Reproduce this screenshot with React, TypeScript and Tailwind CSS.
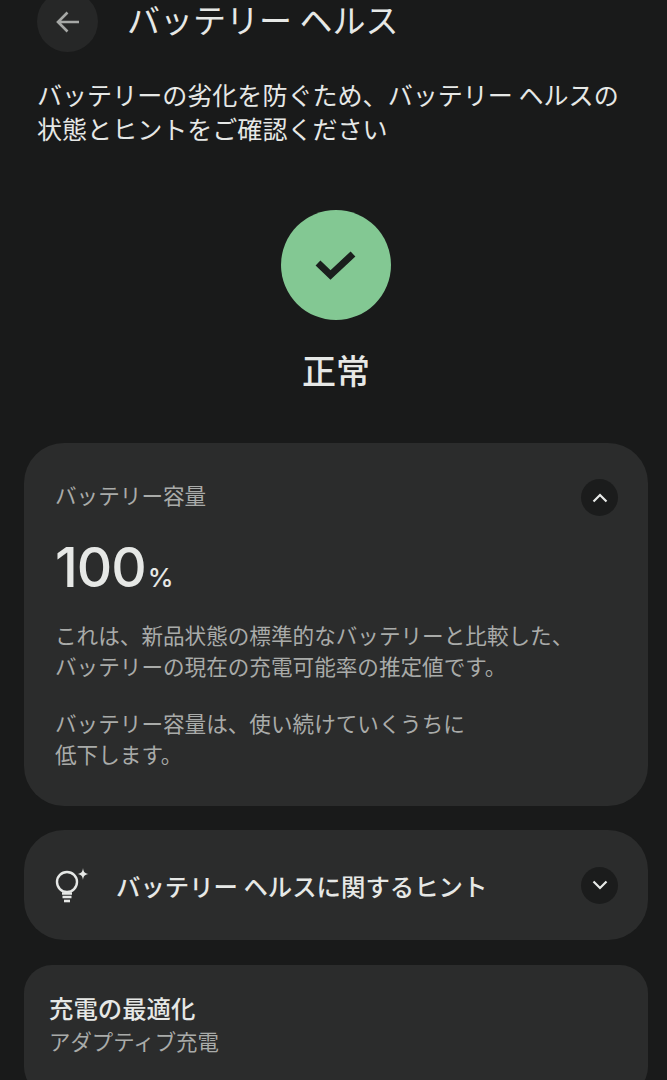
import React from "react";

const jp = "font-['Noto_Sans_CJK_JP','Noto_Sans',sans-serif]";

function Chevron({ up }: { up?: boolean }) {
  return (
    <div className="flex h-[37px] w-[37px] shrink-0 items-center justify-center rounded-full bg-[#1b1c1c]">
      <svg width="18" height="12" viewBox="0 0 18 12" fill="none" stroke="#e8eae8" strokeWidth="2.2">
        <path d={up ? "M2.5 9.5 L9 3 L15.5 9.5" : "M2.5 2.5 L9 9 L15.5 2.5"} />
      </svg>
    </div>
  );
}

export default function App() {
  return (
    <div className={`${jp} flex h-[1080px] w-[667px] flex-col overflow-hidden bg-[#191a1a] text-[#e6e8e6]`}>
      <div className="mt-[-9px] flex items-center pl-[37px]">
        <div className="flex h-[61px] w-[61px] shrink-0 items-center justify-center rounded-full bg-[#262727]">
          <svg width="28" height="28" viewBox="0 0 28 28" fill="none" stroke="#a6a8a6" strokeWidth="2.6">
            <path d="M25 14 H5 M13.5 4.5 L4 14 L13.5 23.5" />
          </svg>
        </div>
        <div className="mb-[6px] ml-[29px] text-[33px] leading-[36px]">バッテリー ヘルス</div>
      </div>

      <p className="mt-[25px] px-[37px] text-[25.05px] leading-[34px]">
        バッテリーの劣化を防ぐため、バッテリー ヘルスの
        <br />
        状態とヒントをご確認ください
      </p>

      <div className="ml-[24px] mt-[65px] flex w-[624px] flex-col items-center">
        <div className="flex h-[110px] w-[110px] items-center justify-center rounded-full bg-[#83c893]">
          <svg width="42" height="32" viewBox="0 0 42 32" fill="none" stroke="#1a1f1d" strokeWidth="7">
            <path d="M3 14 L15.5 26 L38 5" />
          </svg>
        </div>
        <div className="mt-[26px] text-[34px] font-medium leading-[48px]">正常</div>
      </div>

      <section className="ml-[24px] mt-[49px] h-[363px] w-[624px] shrink-0 rounded-[40px] bg-[#2b2c2c] pl-[31px] pr-[30px] pt-[36px]">
        <div className="flex h-[39px] items-start justify-between">
          <div className="text-[21.6px] leading-[32px] text-[#a9aba9]">バッテリー容量</div>
          <Chevron up />
        </div>
        <div className="mt-[19px] flex items-baseline font-['Inter',sans-serif] leading-[60px] text-[#e6e8e6]">
          <span className="text-[55px] font-medium tracking-[-1px]">100</span>
          <span className="ml-[2px] text-[26px] font-medium">%</span>
        </div>
        <p className="mt-[11px] text-[21.6px] leading-[31px] text-[#a9aba9]">
          これは、新品状態の標準的なバッテリーと比較した、
          <br />
          バッテリーの現在の充電可能率の推定値です。
        </p>
        <p className="mt-[26px] text-[21.6px] leading-[31px] text-[#a9aba9]">
          バッテリー容量は、使い続けていくうちに
          <br />
          低下します。
        </p>
      </section>

      <section className="ml-[24px] mt-[24px] flex h-[110px] w-[624px] shrink-0 items-center rounded-[40px] bg-[#2b2c2c] pl-[31px] pr-[30px]">
        <svg width="36" height="38" viewBox="0 0 36 38" fill="none" stroke="#e6e8e6" strokeWidth="2.4" className="shrink-0">
          <circle cx="12" cy="16" r="10" />
          <path d="M7 27.5 H17 M7.5 31 H16.5" />
          <path d="M9 35 H15" strokeWidth="2.6" />
          <path d="M28 2 C28.6 6 29.5 7.3 33.5 8 C29.5 8.7 28.6 10 28 14 C27.4 10 26.5 8.7 22.5 8 C26.5 7.3 27.4 6 28 2 Z" fill="#e6e8e6" stroke="none" />
        </svg>
        <div className="ml-[25px] flex-1 pt-[2px] text-[24.4px] font-medium leading-[36px]">バッテリー ヘルスに関するヒント</div>
        <Chevron />
      </section>

      <section className="ml-[24px] mt-[25px] h-[130px] w-[624px] shrink-0 rounded-[28px] bg-[#2b2c2c] pl-[25px] pt-[25px]">
        <div className="text-[24.4px] font-medium leading-[35px]">充電の最適化</div>
        <div className="text-[21.4px] leading-[32px] text-[#a9aba9]">アダプティブ充電</div>
      </section>
    </div>
  );
}
